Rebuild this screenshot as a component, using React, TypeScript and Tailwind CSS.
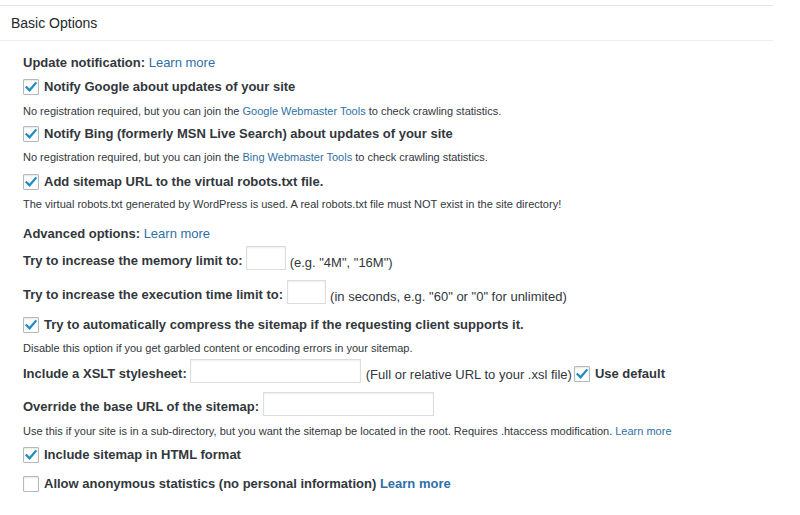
import { ReactNode } from 'react'

function Check({ checked }: { checked: boolean }) {
  return (
    <span className="inline-flex w-[16px] h-[16px] shrink-0 items-center justify-center border border-[#b4b9be] bg-white rounded-[1px] shadow-[inset_0_1px_2px_rgba(0,0,0,0.1)]">
      {checked && (
        <svg width="14" height="14" viewBox="0 0 14 14">
          <path d="M2.5 7.2 L5.6 10.3 L11.6 3.2" fill="none" stroke="#1e8cbe" strokeWidth="2.2" strokeLinecap="square" />
        </svg>
      )}
    </span>
  )
}

function Link({ children }: { children: ReactNode }) {
  return <a className="text-[#2f6fa7] font-normal">{children}</a>
}

function CheckRow({ checked, children, className = '' }: { checked: boolean, children: ReactNode, className?: string }) {
  return (
    <div className={`flex items-center gap-[5px] ${className}`}>
      <Check checked={checked} />
      <span className="font-bold text-[13px] text-[#32373c]">{children}</span>
    </div>
  )
}

function Desc({ children, className = '' }: { children: ReactNode, className?: string }) {
  return <p className={`text-[11px] text-[#32373c] leading-[14px] ${className}`}>{children}</p>
}

function Input({ w }: { w: string }) {
  return <span className={`inline-block h-[24px] border border-[#ddd] bg-white shadow-[inset_0_1px_2px_rgba(0,0,0,0.07)] ${w}`} />
}

export default function App() {
  return (
    <div className="w-[800px] h-[515px] bg-white font-['Liberation_Sans',Arial,sans-serif] text-[#32373c] pt-[5px]">
      <div className="w-[773px] border-t border-[#e5e5e5]">
        <h2 className="h-[35px] flex items-center px-[11px] text-[14px] text-[#23282d] border-b border-[#eee]">Basic Options</h2>
        <div className="pl-[23px] pt-[13px]">
          <div className="font-bold text-[13px] h-[18px] flex items-center">Update notification:&nbsp;<Link>Learn more</Link></div>
          <CheckRow checked className="mt-[6px] h-[18px]">Notify Google about updates of your site</CheckRow>
          <Desc className="mt-[8px]">No registration required, but you can join the <Link>Google Webmaster Tools</Link> to check crawling statistics.</Desc>
          <CheckRow checked className="mt-[7px] h-[18px]">Notify Bing (formerly MSN Live Search) about updates of your site</CheckRow>
          <Desc className="mt-[7px]">No registration required, but you can join the <Link>Bing Webmaster Tools</Link> to check crawling statistics.</Desc>
          <CheckRow checked className="mt-[9px] h-[18px]">Add sitemap URL to the virtual robots.txt file.</CheckRow>
          <Desc className="mt-[6px]">The virtual robots.txt generated by WordPress is used. A real robots.txt file must NOT exist in the site directory!</Desc>
          <div className="font-bold text-[13px] h-[18px] flex items-center mt-[14px]">Advanced options:&nbsp;<Link>Learn more</Link></div>
          <div className="flex items-center mt-[5px] h-[26px] text-[13px]">
            <span className="font-bold">Try to increase the memory limit to:</span>
            <span className="ml-[3px]"><Input w="w-[40px]" /></span>
            <span className="ml-[4px] mt-[3px]">(e.g. "4M", "16M")</span>
          </div>
          <div className="flex items-center mt-[8px] h-[26px] text-[13px]">
            <span className="font-bold">Try to increase the execution time limit to:</span>
            <span className="ml-[4px]"><Input w="w-[39px]" /></span>
            <span className="ml-[4px] mt-[3px]">(in seconds, e.g. "60" or "0" for unlimited)</span>
          </div>
          <CheckRow checked className="mt-[8px] h-[18px]">Try to automatically compress the sitemap if the requesting client supports it.</CheckRow>
          <Desc className="mt-[7px]">Disable this option if you get garbled content or encoding errors in your sitemap.</Desc>
          <div className="flex items-center mt-[7px] h-[24px] text-[13px]">
            <span className="font-bold">Include a XSLT stylesheet:</span>
            <span className="ml-[3px]"><Input w="w-[171px]" /></span>
            <span className="ml-[5px] mt-[2px]">(Full or relative URL to your .xsl file)</span>
            <span className="ml-[2px] flex items-center gap-[5px]"><Check checked /><span className="font-bold">Use default</span></span>
          </div>
          <div className="flex items-center mt-[9px] h-[24px] text-[13px]">
            <span className="font-bold">Override the base URL of the sitemap:</span>
            <span className="ml-[4px]"><Input w="w-[171px]" /></span>
          </div>
          <Desc className="mt-[5px]">Use this if your site is in a sub-directory, but you want the sitemap be located in the root. Requires .htaccess modification. <Link>Learn more</Link></Desc>
          <CheckRow checked className="mt-[8px] h-[18px]">Include sitemap in HTML format</CheckRow>
          <CheckRow checked={false} className="mt-[11px] h-[18px]">Allow anonymous statistics (no personal information) <a className="text-[#2f6fa7]">Learn more</a></CheckRow>
        </div>
      </div>
    </div>
  )
}
